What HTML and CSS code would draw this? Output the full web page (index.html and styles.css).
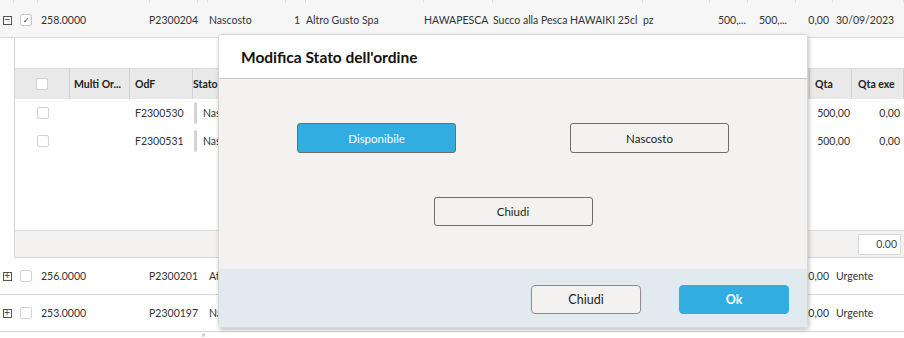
FILE: index.html
```html
<!DOCTYPE html>
<html lang="it">
<head>
    <meta charset="UTF-8">
    <meta name="viewport" content="width=device-width, initial-scale=1.0">
    <title>Ordini</title>
    <link rel="stylesheet" href="styles.css">
</head>
<body>
    <div class="grid">
        <div class="row prev">
            <span class="c-exp"></span><span class="c-chk"></span><span class="c-num"></span><span class="c-odp"></span><span class="c-bar"></span><span class="c-stato"></span><span class="c-qty"></span><span class="c-cli"></span><span class="c-cod"></span><span class="c-desc"></span><span class="c-um"></span><span class="c-v1"></span><span class="c-v2"></span><span class="c-v3"></span><span class="c-date"></span>
        </div>

        <div class="row main selected">
            <span class="c-exp"><span class="toggle">&minus;</span></span>
            <span class="c-chk"><span class="box checked">&#10003;</span></span>
            <span class="c-num">258.0000</span>
            <span class="c-odp">P2300204</span>
            <span class="c-bar"><i class="bar"></i></span>
            <span class="c-stato">Nascosto</span>
            <span class="c-qty">1</span>
            <span class="c-cli">Altro Gusto Spa</span>
            <span class="c-cod">HAWAPESCA</span>
            <span class="c-desc">Succo alla Pesca HAWAIKI 25cl</span>
            <span class="c-um">pz</span>
            <span class="c-v1">500,...</span>
            <span class="c-v2">500,...</span>
            <span class="c-v3">0,00</span>
            <span class="c-date">30/09/2023</span>
        </div>

        <div class="detail">
            <div class="detail-top"></div>
            <div class="drow dhead">
                <span class="d-chk"><span class="box"></span></span>
                <span class="d-multi">Multi Or...</span>
                <span class="d-odf">OdF</span>
                <span class="d-stato">Stato</span>
                <span class="d-fill"></span>
                <span class="d-qta">Qta</span>
                <span class="d-exe">Qta exe</span>
            </div>
            <div class="drow">
                <span class="d-chk"><span class="box"></span></span>
                <span class="d-multi"></span>
                <span class="d-odf">F2300530</span>
                <span class="d-stato"><i class="bar"></i>Nascosto</span>
                <span class="d-fill"></span>
                <span class="d-qta num">500,00</span>
                <span class="d-exe num">0,00</span>
            </div>
            <div class="drow">
                <span class="d-chk"><span class="box"></span></span>
                <span class="d-multi"></span>
                <span class="d-odf">F2300531</span>
                <span class="d-stato"><i class="bar"></i>Nascosto</span>
                <span class="d-fill"></span>
                <span class="d-qta num">500,00</span>
                <span class="d-exe num">0,00</span>
            </div>
            <div class="detail-empty"></div>
            <div class="detail-foot">
                <span class="sum">0.00</span>
            </div>
        </div>

        <div class="row main">
            <span class="c-exp"><span class="toggle">+</span></span>
            <span class="c-chk"><span class="box"></span></span>
            <span class="c-num">256.0000</span>
            <span class="c-odp">P2300201</span>
            <span class="c-bar"><i class="bar blue"></i></span>
            <span class="c-stato">Attivo</span>
            <span class="c-qty"></span>
            <span class="c-cli"></span>
            <span class="c-cod"></span>
            <span class="c-desc"></span>
            <span class="c-um"></span>
            <span class="c-v1"></span>
            <span class="c-v2"></span>
            <span class="c-v3">0,00</span>
            <span class="c-date">Urgente</span>
        </div>

        <div class="row main">
            <span class="c-exp"><span class="toggle">+</span></span>
            <span class="c-chk"><span class="box"></span></span>
            <span class="c-num">253.0000</span>
            <span class="c-odp">P2300197</span>
            <span class="c-bar"><i class="bar"></i></span>
            <span class="c-stato">Nascosto</span>
            <span class="c-qty"></span>
            <span class="c-cli"></span>
            <span class="c-cod"></span>
            <span class="c-desc"></span>
            <span class="c-um"></span>
            <span class="c-v1"></span>
            <span class="c-v2"></span>
            <span class="c-v3">0,00</span>
            <span class="c-date">Urgente</span>
        </div>

        <div class="row main last">
            <span class="c-exp"></span><span class="c-chk"></span><span class="c-num"></span><span class="c-odp"></span>
            <span class="c-bar"><i class="bar"></i></span>
        </div>
    </div>

    <div class="dialog">
        <div class="dialog-head">Modifica Stato dell'ordine</div>
        <div class="dialog-body">
            <div class="choice-row">
                <button class="btn primary">Disponibile</button>
                <button class="btn">Nascosto</button>
            </div>
            <div class="choice-row">
                <button class="btn">Chiudi</button>
            </div>
        </div>
        <div class="dialog-foot">
            <button class="btn foot">Chiudi</button>
            <button class="btn foot ok">Ok</button>
        </div>
    </div>
</body>
</html>
```

FILE: styles.css
```css
body {
    margin: 0;
    font-family: Lato, "Noto Sans", sans-serif;
    font-size: 10.5px;
    color: #333;
    background: #fff;
    overflow: hidden;
    height: 338px;
}

.grid {
    width: 904px;
}

.row {
    display: flex;
    align-items: center;
    white-space: nowrap;
}

.row > span {
    display: flex;
    align-items: center;
    flex-shrink: 0;
}

.row.prev {
    height: 3px;
    background: #f6f6f6;
    overflow: hidden;
}

.row.prev > span {
    height: 3px;
    border-right: 1px solid #dedede;
    box-sizing: border-box;
}

.row.main {
    height: 36px;
    border-bottom: 1px solid #d6d6d6;
}

.row.selected {
    height: 34px;
    background: #f6f6f6;
    border-bottom: 1px solid #d8d8d8;
}

.row.last {
    border-bottom: none;
    align-items: flex-start;
    height: 6px;
}

.c-exp { width: 14px; justify-content: center; }
.c-chk { width: 24px; justify-content: center; }
.c-num { width: 112px; padding-left: 3px; box-sizing: border-box; }
.c-odp { width: 48px; justify-content: flex-end; }
.c-bar { width: 10px; justify-content: center; align-self: stretch; }
.c-stato { width: 78px; padding-left: 1px; box-sizing: border-box; }
.c-qty { width: 20px; justify-content: flex-end; padding-right: 6px; box-sizing: border-box; }
.c-cli { width: 118px; }
.c-cod { width: 69px; }
.c-desc { width: 150px; }
.c-um { width: 67px; }
.c-v1 { width: 38px; justify-content: flex-end; padding-right: 2px; box-sizing: border-box; }
.c-v2 { width: 48px; padding-left: 11px; box-sizing: border-box; }
.c-v3 { width: 37px; justify-content: flex-end; padding-right: 4px; box-sizing: border-box; }
.c-date { width: 71px; padding-left: 3px; box-sizing: border-box; }

.bar {
    display: block;
    width: 3px;
    margin: 3px 0;
    border-radius: 2px;
    background: #d4d4d4;
    flex: 1;
}

.row.last .bar {
    height: 4px;
    flex: none;
    margin-top: 3px;
}

.bar.blue {
    background: #2a7893;
}

.toggle {
    display: flex;
    align-items: center;
    justify-content: center;
    width: 7px;
    height: 7px;
    border: 1px solid #555;
    font-family: "DejaVu Sans", sans-serif;
    font-size: 8px;
    line-height: 1;
    color: #333;
}

.box {
    display: flex;
    align-items: center;
    justify-content: center;
    width: 10px;
    height: 10px;
    border: 1px solid #d2d2d2;
    border-radius: 2px;
    background: #fff;
    font-family: "DejaVu Sans", sans-serif;
    font-size: 8px;
    color: #333;
}

.box.checked {
    border-color: #c8c8c8;
}

/* detail grid */
.detail {
    margin-left: 14px;
    border-left: 1px solid #d4d4de;
    border-bottom: 1px solid #d4d4de;
    display: flex;
    flex-direction: column;
}

.detail-top {
    height: 30px;
    background: #fff;
    border-bottom: 1px solid #dcdcdc;
}

.drow {
    display: flex;
    height: 28px;
    align-items: center;
    white-space: nowrap;
}

.drow > span {
    display: flex;
    align-items: center;
    height: 100%;
    box-sizing: border-box;
    overflow: hidden;
    flex-shrink: 0;
}

.drow.dhead {
    height: 30px;
    background: #e9e9e9;
    font-weight: bold;
    color: #222;
}

.drow.dhead > span {
    border-right: 1px solid #d2d2d2;
}

.d-chk { width: 55px; justify-content: center; }
.d-multi { width: 60px; padding-left: 4px; }
.d-odf { width: 63px; padding-left: 5px; }
.d-stato { width: 120px; padding-left: 0; }
.d-fill { flex: 1 !important; flex-shrink: 1 !important; }
.d-qta { width: 42px; padding-left: 5px; }
.d-exe { width: 52px; padding-left: 6px; }

.drow .d-stato .bar {
    flex: none;
    height: 22px;
    margin: 0 6px 0 1px;
}

.drow .num {
    justify-content: flex-end;
    padding-right: 2px;
}

.drow .d-exe.num {
    padding-right: 4px;
}

.drow.dhead .d-fill {
    border-right: 1px solid #d2d2d2;
}

.detail-empty {
    height: 75px;
    background: #fff;
    border-bottom: 1px solid #dcdce4;
}

.detail-foot {
    height: 26px;
    background: #f3f2f1;
    display: flex;
    align-items: center;
    justify-content: flex-end;
    padding-right: 3px;
}

.sum {
    width: 38px;
    height: 19px;
    border: 1px solid #d8d8d8;
    background: #fff;
    display: flex;
    align-items: center;
    justify-content: flex-end;
    padding-right: 3px;
    color: #444;
}

/* modal */
.dialog {
    position: absolute;
    left: 218px;
    top: 34px;
    width: 590px;
    height: 294px;
    border-radius: 4px;
    overflow: hidden;
    box-shadow: 1px 2px 4px rgba(0, 0, 0, 0.25);
    border: 1px solid #d6d6d6;
    box-sizing: border-box;
    display: flex;
    flex-direction: column;
}

.dialog-head {
    height: 43px;
    background: #fff;
    border-bottom: 1px solid #c4c4c4;
    padding-left: 22px;
    display: flex;
    align-items: center;
    font-size: 15.5px;
    font-weight: bold;
    color: #111;
    flex-shrink: 0;
}

.dialog-body {
    height: 190px;
    background: #f3f2f1;
    padding-top: 44px;
    box-sizing: border-box;
    flex-shrink: 0;
}

.choice-row {
    display: flex;
    justify-content: center;
    gap: 114px;
    margin-bottom: 44px;
}

.btn {
    width: 159px;
    height: 30px;
    font-family: inherit;
    font-size: 11.5px;
    color: #222;
    background: #f3f2f1;
    border: 1px solid #6e6e6e;
    border-radius: 3px;
    padding: 0;
}

.choice-row + .choice-row .btn {
    height: 29px;
}

.btn.primary {
    background: #31ade2;
    color: #fff;
}

.dialog-foot {
    flex: 1;
    background: #e0eaef;
    display: flex;
    justify-content: flex-end;
    align-items: flex-start;
    gap: 38px;
    padding: 16px 18px 0 0;
}

.btn.foot {
    width: 110px;
    height: 29px;
    font-size: 12.5px;
    border-color: #8c8c8c;
    border-radius: 4px;
}

.btn.ok {
    background: #31ade2;
    border-color: #31ade2;
    color: #fff;
    font-weight: bold;
}
```
